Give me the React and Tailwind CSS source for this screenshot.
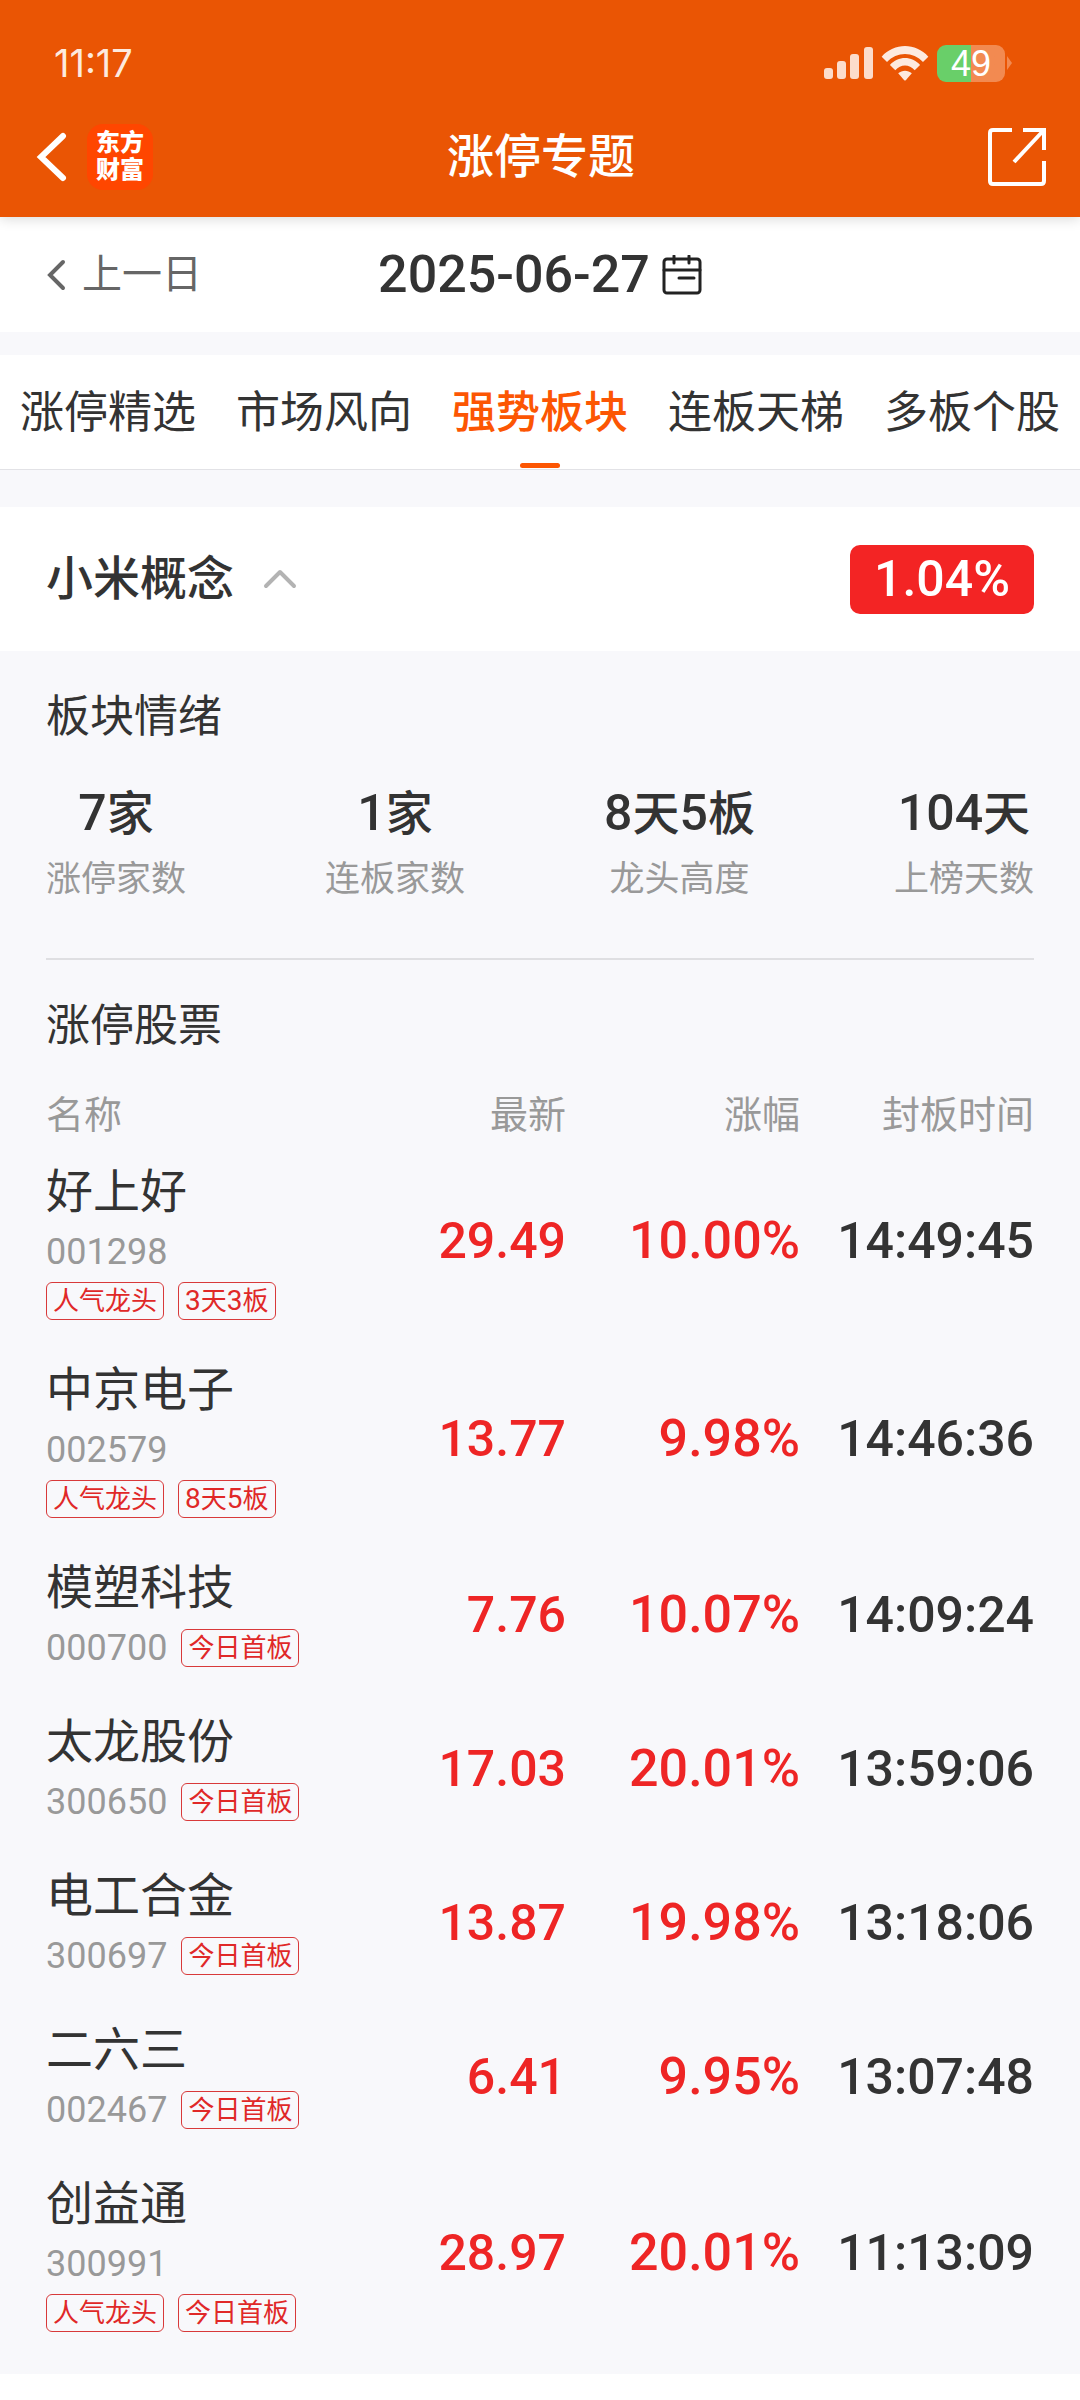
import { useState } from 'react';
import clsx from 'clsx';

const TABS = ['涨停精选', '市场风向', '强势板块', '连板天梯', '多板个股'];

const STATS = [
  { value: '7家', label: '涨停家数' },
  { value: '1家', label: '连板家数' },
  { value: '8天5板', label: '龙头高度' },
  { value: '104天', label: '上榜天数' },
];

const STOCKS = [
  { name: '好上好', code: '001298', price: '29.49', change: '10.00%', time: '14:49:45', tags: ['人气龙头', '3天3板'] },
  { name: '中京电子', code: '002579', price: '13.77', change: '9.98%', time: '14:46:36', tags: ['人气龙头', '8天5板'] },
  { name: '模塑科技', code: '000700', price: '7.76', change: '10.07%', time: '14:09:24', tags: ['今日首板'] },
  { name: '太龙股份', code: '300650', price: '17.03', change: '20.01%', time: '13:59:06', tags: ['今日首板'] },
  { name: '电工合金', code: '300697', price: '13.87', change: '19.98%', time: '13:18:06', tags: ['今日首板'] },
  { name: '二六三', code: '002467', price: '6.41', change: '9.95%', time: '13:07:48', tags: ['今日首板'] },
  { name: '创益通', code: '300991', price: '28.97', change: '20.01%', time: '11:13:09', tags: ['人气龙头', '今日首板'] },
];

// Digits are set slightly larger than the Chinese characters around them
const MixedText = ({ text, digitClass }) =>
  text.split(/(\d+)/).filter(Boolean).map((part, i) => (
    <span key={i} className={/\d/.test(part) ? digitClass : undefined}>
      {part}
    </span>
  ));

const StatusBar = () => (
  <div className="flex items-center justify-between pt-9 pl-[54px] pr-[68px] h-[90px]">
    <span className="font-['Inter'] text-[38px] leading-[50px] text-[#fdeadf]">11:17</span>
    <div className="flex items-center gap-2">
      <svg width="49" height="32" viewBox="0 0 49 32" fill="#fcdccb">
        <rect x="0" y="21" width="9" height="11" rx="3" />
        <rect x="13" y="14" width="9" height="18" rx="3" />
        <rect x="26" y="7" width="9" height="25" rx="3" />
        <rect x="40" y="0" width="9" height="32" rx="3" />
      </svg>
      <svg width="48" height="35" viewBox="0 0 48 36" fill="#fdeadf">
        <path d="M0 11C13-3.500 35-3.500 48 11L42.500 16.500C32.500 5.500 15.500 5.500 5.500 16.500Z" />
        <path d="M8.500 19.500C17 10 31 10 39.500 19.500L34 25C28.500 18.500 19.500 18.500 14 25Z" />
        <path d="M17 28C21 24.500 27 24.500 31 28L24.800 35.200Q24 36 23.200 35.200Z" />
      </svg>
      <div className="flex items-center gap-0.5">
        <div className="flex h-[37px] w-[68px] items-center justify-center rounded-[9px] bg-linear-to-r from-[#69cf69] from-50% to-[#f28a51] to-50% font-['Liberation_Sans'] text-4xl leading-[37px] text-white">
          49
        </div>
        <svg width="5" height="14" viewBox="0 0 5 14" fill="#f28a51">
          <path d="M0 0L5 7L0 14Z" />
        </svg>
      </div>
    </div>
  </div>
);

const NavBar = () => (
  <div className="grid h-[127px] grid-cols-[1fr_auto_1fr] items-center pt-1.5 pl-[36px] pr-[34px]">
    <div className="flex items-center gap-5">
      <button type="button" aria-label="返回">
        <svg width="31" height="50" viewBox="0 0 31 50" fill="none" stroke="white" strokeWidth="6" strokeLinecap="round">
          <path d="M27 4L5 25L27 46" />
        </svg>
      </button>
      <div className="flex h-[66px] w-[66px] flex-col items-center justify-center rounded-2xl bg-[#ff4600] text-2xl leading-[27px] font-black text-white">
        <span>东方</span>
        <span>财富</span>
      </div>
    </div>
    <h1 className="text-[47px] leading-[60px] font-medium text-white">涨停专题</h1>
    <button type="button" aria-label="分享" className="justify-self-end">
      <svg width="58" height="58" viewBox="0 0 58 58" fill="none" stroke="white" strokeWidth="4">
        <path d="M24 2H5Q2 2 2 5V53Q2 56 5 56H53Q56 56 56 53V33" />
        <path d="M35 2H56V22" />
        <path d="M55 3L26 34" />
      </svg>
    </button>
  </div>
);

const DateBar = () => (
  <div className="grid h-[115px] grid-cols-[1fr_auto_1fr] items-center bg-white px-[46px]">
    <button type="button" className="flex items-center gap-4 text-[40px] leading-[60px] text-[#666]">
      <svg width="20" height="32" viewBox="0 0 20 32" fill="none" stroke="currentColor" strokeWidth="4" strokeLinecap="round">
        <path d="M17 3L4 16L17 29" />
      </svg>
      上一日
    </button>
    <button type="button" className="flex items-center gap-3 text-[52px] leading-[60px] font-medium text-[#333]">
      2025-06-27
      <svg width="40" height="40" viewBox="0 0 40 40" fill="none" stroke="#222" strokeWidth="3" strokeLinecap="round">
        <rect x="2" y="4" width="36" height="34" rx="3" />
        <path d="M2 15H38M12 1V8M27 1V8M17 23H32" />
      </svg>
    </button>
  </div>
);

const Tag = ({ text }) => (
  <span className="flex h-[38px] items-center rounded-md border border-[#d8393a] px-1.5 text-[26px] leading-[36px] whitespace-nowrap text-[#e02828]">
    <MixedText text={text} digitClass="text-[28px]" />
  </span>
);

const StockRow = ({ stock }) => {
  const stacked = stock.tags.length > 1;
  const tags = stock.tags.map((tag) => <Tag key={tag} text={tag} />);

  return (
    <tr>
      <td className="py-5">
        <div className="flex flex-col gap-1.5">
          <div className="text-[47px] leading-[60px] whitespace-nowrap text-[#333]">{stock.name}</div>
          <div className="flex h-12 items-center gap-3.5">
            <span className="text-4xl leading-[48px] text-[#999]">{stock.code}</span>
            {!stacked && tags}
          </div>
          {stacked && <div className="flex gap-3.5">{tags}</div>}
        </div>
      </td>
      <td className="text-right text-[50px] leading-[60px] font-medium text-[#ee2525]">{stock.price}</td>
      <td className="text-right text-[52px] leading-[60px] font-medium text-[#ee2525]">{stock.change}</td>
      <td className="text-right text-[50px] leading-[60px] font-medium text-[#333]">{stock.time}</td>
    </tr>
  );
};

const App = () => {
  const [activeTab, setActiveTab] = useState('强势板块');
  const [open, setOpen] = useState(true);

  return (
    <div className="min-h-screen bg-white font-['Roboto','Noto_Sans_CJK_SC',sans-serif]" lang="zh-CN">
      <header className="relative bg-[#ea5504] shadow-[0_2px_12px_rgba(0,0,0,0.15)]">
        <StatusBar />
        <NavBar />
      </header>

      <main className="bg-[#f8f8fb]">
        <DateBar />

        <nav className="mt-[23px] flex h-[115px] justify-between border-b border-[#e2e2e6] bg-white px-5">
          {TABS.map((tab) => (
            <button
              key={tab}
              type="button"
              onClick={() => setActiveTab(tab)}
              className={clsx(
                'relative pt-0.5 text-[44px] leading-[60px] whitespace-nowrap',
                tab === activeTab ? 'font-medium text-[#fc5603]' : 'text-[#333]'
              )}
            >
              {tab}
              {tab === activeTab && (
                <span className="absolute bottom-px left-1/2 h-[5px] w-10 -translate-x-1/2 rounded-full bg-[#fc5603]" />
              )}
            </button>
          ))}
        </nav>

        <section className="mt-[37px]">
          <div className="flex h-36 items-center justify-between bg-white px-[46px]">
            <button
              type="button"
              aria-expanded={open}
              onClick={() => setOpen(!open)}
              className="flex items-center gap-7 text-[47px] leading-[60px] font-medium text-[#333]"
            >
              小米概念
              <svg
                width="36"
                height="22"
                viewBox="0 0 36 22"
                fill="none"
                stroke="#b3b3b3"
                strokeWidth="4"
                strokeLinecap="round"
                strokeLinejoin="round"
                className={open ? '' : 'rotate-180'}
              >
                <path d="M4 18L18 4L32 18" />
              </svg>
            </button>
            <span className="flex h-[69px] w-[184px] items-center justify-center rounded-[10px] bg-[#f32424] text-[50px] leading-[60px] font-medium text-white">
              1.04%
            </span>
          </div>

          {open && (
            <div className="px-[46px] pt-9 pb-[22px]">
              <h2 className="text-[44px] leading-[60px] text-[#333]">板块情绪</h2>
              <div className="mt-9 flex justify-between border-b-2 border-[#dfdfe2] pb-[54px]">
                {STATS.map(({ value, label }) => (
                  <div key={label} className="text-center">
                    <div className="text-[47px] leading-[60px] font-medium text-[#333]">
                      <MixedText text={value} digitClass="text-[50px]" />
                    </div>
                    <div className="mt-3 text-[35px] leading-[48px] text-[#999]">{label}</div>
                  </div>
                ))}
              </div>

              <h2 className="mt-9 text-[44px] leading-[60px] text-[#333]">涨停股票</h2>
              <table className="mt-8 w-full table-fixed">
                <thead>
                  <tr className="h-[54px] text-right text-[38px] leading-[54px] text-[#999]">
                    <th className="text-left font-normal">名称</th>
                    <th className="w-[160px] font-normal">最新</th>
                    <th className="w-[234px] font-normal">涨幅</th>
                    <th className="w-[234px] font-normal">封板时间</th>
                  </tr>
                </thead>
                <tbody>
                  {STOCKS.map((stock) => (
                    <StockRow key={stock.code} stock={stock} />
                  ))}
                </tbody>
              </table>
            </div>
          )}
        </section>
      </main>
    </div>
  );
};

export default App;
